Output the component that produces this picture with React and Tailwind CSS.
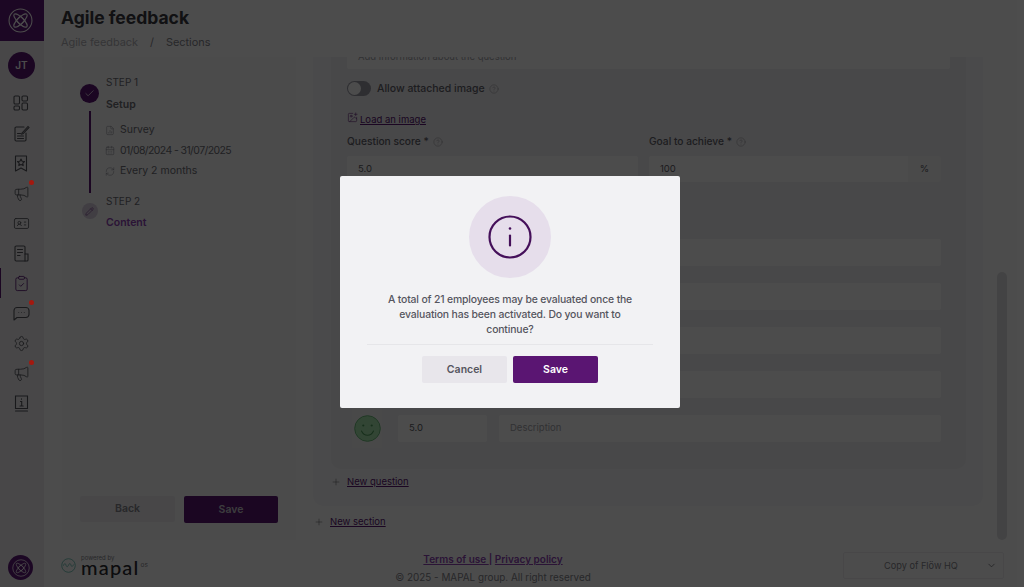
import { Check, Pencil, CalendarDays, RefreshCw, Megaphone, IdCard, ClipboardCheck, Settings, CircleHelp, Plus, ChevronDown, ImagePlus, FileChartColumn } from "lucide-react";

const font = { fontFamily: "Inter, 'Open Sans', sans-serif" };

const Logo = ({ size, color = "#ffffff" }) => (
  <svg width={size} height={size} viewBox="0 0 24 24" fill="none" stroke={color} strokeWidth="1">
    <circle cx="12" cy="12" r="11" />
    <ellipse cx="12" cy="12" rx="2.800" ry="8.500" transform="rotate(45 12 12)" />
    <ellipse cx="12" cy="12" rx="2.800" ry="8.500" transform="rotate(-45 12 12)" />
    <rect x="9" y="9" width="6" height="6" transform="rotate(45 12 12)" />
  </svg>
);

const DashIcon = () => (
  <svg width="16" height="16" viewBox="0 0 16 16" fill="none" stroke="currentColor" strokeWidth="1.1">
    <rect x="1" y="1" width="5.5" height="8" rx="1.2" />
    <rect x="1" y="11" width="5.5" height="4" rx="1.2" />
    <rect x="9" y="1" width="5.5" height="5" rx="1.2" />
    <rect x="9" y="8" width="5.5" height="7" rx="1.2" />
  </svg>
);

const NoteIcon = () => (
  <svg width="17" height="17" viewBox="0 0 17 17" fill="none" stroke="currentColor" strokeWidth="1.1" strokeLinecap="round">
    <path d="M11 2H3.2C2.5 2 2 2.5 2 3.2v11.6c0 .7.5 1.2 1.2 1.2h8.6c.7 0 1.2-.5 1.2-1.2V8" />
    <path d="M4.5 8.5h3M4.5 11h6M4.5 13.5h6" />
    <path d="M9 8l6-6.5 1 1-6 6.3-1.4.3z" />
  </svg>
);

const BookmarkIcon = () => (
  <svg width="16" height="17" viewBox="0 0 16 17" fill="none" stroke="currentColor" strokeWidth="1.1" strokeLinejoin="round">
    <path d="M2.5 1h11v15l-5.5-3-5.5 3z" />
    <path d="M8 4l1.1 2.2 2.4.3-1.7 1.7.4 2.4L8 9.5l-2.2 1.1.4-2.4-1.7-1.7 2.4-.3z" />
  </svg>
);

const ReportIcon = () => (
  <svg width="17" height="17" viewBox="0 0 17 17" fill="none" stroke="currentColor" strokeWidth="1.1" strokeLinecap="round">
    <path d="M12 9V2.2C12 1.5 11.5 1 10.8 1H3.2C2.5 1 2 1.500 2 2.200v12.600c0 .7.5 1.200 1.200 1.200H14c.6 0 1-.4 1-1V9z" />
    <path d="M12 16V9M4.500 4.500h5M4.500 7.500h5M4.500 10.500h2.500" />
  </svg>
);

const ChatIcon = () => (
  <svg width="17" height="15" viewBox="0 0 17 15" fill="none" stroke="currentColor" strokeWidth="1.1" strokeLinejoin="round">
    <path d="M4 1.500h9c1.500 0 3 1.300 3 3v4c0 1.700-1.500 3-3 3H4l-3 2.500V4.500c0-1.700 1.500-3 3-3z" />
    <path d="M5.500 6.500h.6M8.200 6.500h.6M10.900 6.500h.6" />
  </svg>
);

const BookInfoIcon = () => (
  <svg width="15" height="17" viewBox="0 0 15 17" fill="none" stroke="currentColor" strokeWidth="1.1" strokeLinecap="round">
    <path d="M1.500 13.500V1h12v12.500z" />
    <path d="M1.500 16h12" />
    <path d="M6.500 6.500h1.200v4.500M6 11h3.200M7.500 3.800v.4" />
  </svg>
);

const Face = () => (
  <svg width="27" height="27" viewBox="0 0 27 27">
    <circle cx="13.500" cy="13.500" r="12.800" fill="#a8e8b0" stroke="#6cba7a" strokeWidth="1" />
    <circle cx="9.300" cy="10.500" r="1.100" fill="#4f9e5c" />
    <circle cx="17.700" cy="10.500" r="1.100" fill="#4f9e5c" />
    <path d="M7.500 16c1.500 3.200 3.500 4.200 6 4.200s4.500-1 6-4.200" fill="none" stroke="#4f9e5c" strokeWidth="1.100" strokeLinecap="round" />
  </svg>
);

const sideItems = [
  { icon: <DashIcon /> },
  { icon: <NoteIcon /> },
  { icon: <BookmarkIcon /> },
  { icon: <Megaphone size={17} strokeWidth={1.2} />, dot: true },
  { icon: <IdCard size={17} strokeWidth={1.2} /> },
  { icon: <ReportIcon /> },
  { icon: <ClipboardCheck size={17} strokeWidth={1.2} />, active: true },
  { icon: <ChatIcon />, dot: true },
  { icon: <Settings size={17} strokeWidth={1.2} /> },
  { icon: <Megaphone size={17} strokeWidth={1.2} />, dot: true },
  { icon: <BookInfoIcon /> },
];

const Sidebar = () => (
  <aside className="flex w-[44px] shrink-0 flex-col bg-[#f0eff2]">
    <div className="flex h-[41px] w-full items-center justify-center bg-[#5f1a78] pr-[3px]">
      <Logo size={25} />
    </div>
    <div className="ml-[8px] mt-[11px] flex h-[27px] w-[27px] items-center justify-center rounded-full bg-[#5a1572] text-[10px] font-semibold text-white">JT</div>
    <div className="mt-[9px] flex w-full flex-col">
      {sideItems.map((item, i) => (
        <div key={i} className={`relative flex h-[30px] w-full items-center justify-center ${item.active ? "border-l border-[#5a1572] pr-[3px] text-[#5a1572]" : "pr-[2px] text-[#55555c]"}`}>
          {item.icon}
          {item.dot && <span className="absolute left-[29px] top-[2px] z-[60] h-[5px] w-[5px] rounded-full bg-[#a3190f]"></span>}
        </div>
      ))}
    </div>
    <div className="mb-[7px] ml-[8px] mt-auto flex h-[25px] w-[25px] items-center justify-center rounded-full bg-[#5f1a78]">
      <Logo size={18} />
    </div>
  </aside>
);

const StepLine = ({ icon, children, className = "" }) => (
  <div className={`flex h-[20.5px] items-center gap-[5px] text-[10.5px] text-[#6e6e75] ${className}`}>
    <span className="flex w-[10px] justify-center text-[#85858c]">{icon}</span>
    {children}
  </div>
);

const StepsPanel = () => (
  <div className="flex w-[234px] shrink-0 flex-col bg-[#fbfbfc] pl-[18px]">
    <div className="flex pt-[18px]">
      <div className="flex w-[19px] flex-col items-center">
        <div className="mt-[9px] flex h-[19px] w-[19px] items-center justify-center rounded-full bg-[#5a1572] text-white">
          <Check size={11} strokeWidth={1.5} />
        </div>
        <div className="mt-[8px] h-[82px] w-[2px] bg-[#5a1572]"></div>
      </div>
      <div className="ml-[7px]">
        <div className="text-[10px] leading-[14px] text-[#6e6e75]">STEP 1</div>
        <div className="mt-[9px] text-[10.5px] font-semibold leading-[14px] text-[#6e6e75]">Setup</div>
        <div className="ml-[-1px] mt-[8px]">
          <StepLine icon={<FileChartColumn size={11} strokeWidth={1.2} />}>Survey</StepLine>
          <StepLine icon={<CalendarDays size={11} strokeWidth={1.2} />} className="tracking-[-0.6px]">01/08/2024 - 31/07/2025</StepLine>
          <StepLine icon={<RefreshCw size={11} strokeWidth={1.2} />}>Every 2 months</StepLine>
        </div>
      </div>
    </div>
    <div className="flex">
      <div className="flex w-[19px] justify-center">
        <div className="mt-[10px] flex h-[16px] w-[16px] items-center justify-center rounded-full bg-[#d9cfe0] text-[#5a1572]">
          <Pencil size={9} strokeWidth={1.3} />
        </div>
      </div>
      <div className="ml-[7px]">
        <div className="mt-[1px] text-[10px] leading-[14px] text-[#6e6e75]">STEP 2</div>
        <div className="mt-[8px] text-[10.5px] font-semibold leading-[14px] text-[#8f45b5]">Content</div>
      </div>
    </div>
    <div className="mb-[17px] mt-auto flex gap-[9px]">
      <button className="h-[26px] w-[95px] rounded-[2px] bg-[#f0eff2] text-[10.5px] font-semibold text-[#85858c]">Back</button>
      <button className="h-[27px] w-[94px] rounded-[2px] bg-[#5a1572] text-[10.5px] font-semibold text-[#c9c9cf]">Save</button>
    </div>
  </div>
);

const ScoreRow = ({ score }) => (
  <div className="flex items-center">
    <div className="flex h-[40px] w-[30px] items-center justify-center bg-[#f5f5f6]">
      <Face />
    </div>
    <div className="ml-[16px] flex h-[27px] w-[89px] items-center rounded-[2px] bg-white pl-[11px] text-[9.5px] text-[#5e5e66]">{score}</div>
    <div className="ml-[12px] flex h-[27px] w-[442px] items-center rounded-[2px] bg-white pl-[11px] text-[9.5px] text-[#a5a5ac]">Description</div>
  </div>
);

const FormPanel = () => (
  <div className="flex min-w-0 flex-1 overflow-hidden pl-[17px]">
    <div className="w-[670px] shrink-0">
      <div className="rounded-b-[10px] bg-[#f9f9fa] pb-[17px]">
        <div className="ml-[18px] mr-[17px] rounded-b-[10px] bg-[#f1f0f3] pb-[21px] pl-[16px]">
          <div className="mt-[-2px] flex h-[14px] w-[603px] items-end rounded-[2px] bg-white pb-[7px] pl-[11px] text-[9.5px] leading-[10px] text-[#a5a5ac]">Add information about the question</div>
          <div className="mt-[12px] flex h-[15px] items-center">
            <div className="flex h-[15px] w-[24px] items-center rounded-full bg-[#9a9aa6] pl-[1px]">
              <div className="h-[13px] w-[13px] rounded-full bg-white"></div>
            </div>
            <span className="ml-[6px] text-[10.5px] font-medium text-[#63636b]">Allow attached image</span>
            <CircleHelp size={10} strokeWidth={1} className="ml-[4px] text-[#85858c]" />
          </div>
          <div className="mt-[17px] flex h-[14px] items-center text-[#5a1572]">
            <ImagePlus size={11} strokeWidth={1.2} className="mt-[-6px]" />
            <span className="ml-[2px] text-[9.5px] underline">Load an image</span>
          </div>
          <div className="mt-[8px] flex h-[14px]">
            <div className="flex w-[302px] items-center text-[10.2px] font-medium text-[#63636b]">
              Question score *<CircleHelp size={10} strokeWidth={1} className="ml-[4px] text-[#85858c]" />
            </div>
            <div className="flex items-center text-[10.2px] font-medium text-[#63636b]">
              Goal to achieve *<CircleHelp size={10} strokeWidth={1} className="ml-[4px] text-[#85858c]" />
            </div>
          </div>
          <div className="mt-[7px] flex h-[26px] text-[9.5px] text-[#5e5e66]">
            <div className="flex w-[291px] items-center rounded-[2px] bg-white pl-[11px]">5.0</div>
            <div className="ml-[11px] flex w-[259px] items-center rounded-l-[2px] bg-white pl-[11px]">100</div>
            <div className="flex w-[33px] items-center justify-center rounded-r-[2px] bg-[#f7f7f8]">%</div>
          </div>
          <div className="mt-[50px] flex flex-col gap-[4px] pl-[5px]">
            <ScoreRow score="1.0" />
            <ScoreRow score="2.0" />
            <ScoreRow score="3.0" />
            <ScoreRow score="4.0" />
            <ScoreRow score="5.0" />
          </div>
        </div>
        <div className="ml-[18px] mt-[6px] flex h-[14px] items-center text-[#5a1572]">
          <Plus size={10} strokeWidth={1.2} className="text-[#55555c]" />
          <span className="ml-[6px] text-[9.5px] underline">New question</span>
        </div>
      </div>
      <div className="ml-[1px] mt-[9px] flex h-[14px] items-center text-[#5a1572]">
        <Plus size={10} strokeWidth={1.2} className="text-[#55555c]" />
        <span className="ml-[6px] text-[9.5px] underline">New section</span>
      </div>
    </div>
    <div className="ml-[14px] flex w-[10px] flex-col justify-end">
      <div className="h-[268px] rounded-full bg-[#e2e2e4]"></div>
    </div>
  </div>
);

const Footer = () => (
  <footer className="flex h-[47px] shrink-0 items-start pl-[17px]">
    <div className="mt-[14px] flex w-[89px] shrink-0 items-center">
      <svg width="15" height="15" viewBox="0 0 21 21" fill="none" stroke="#5bb8aa" strokeWidth="1.1" className="mt-[3px] shrink-0">
        <circle cx="10.500" cy="10.500" r="9.500" />
        <path d="M3 11c2-4 3-4 4-1s2 3 3.500 0 2.500-3 3.500 0 2 2 4-1" />
      </svg>
      <div className="ml-[5px] flex flex-col">
        <span className="text-[6px] leading-[7px] text-[#85858c]">powered by</span>
        <div className="flex items-start">
          <span className="text-[20px] font-medium leading-[13px] tracking-[1.2px] text-[#2a2a30]" style={{ fontFamily: "Lato, sans-serif" }}>mapal</span>
          <span className="ml-[1px] text-[6.5px] leading-[8px] text-[#85858c]">os</span>
        </div>
      </div>
    </div>
    <div className="ml-[233px] flex w-[220px] shrink-0 flex-col items-center pt-[12px]">
      <div className="whitespace-nowrap text-[10px] font-semibold leading-[14px] text-[#8f45b5]">
        <span className="underline">Terms of use </span>| <span className="underline">Privacy policy</span>
      </div>
      <div className="mt-[4px] whitespace-nowrap text-[9.9px] leading-[14px] text-[#85858c]">© 2025 - MAPAL group. All right reserved</div>
    </div>
    <div className="ml-[240px] mt-[12px] flex h-[27px] w-[161px] shrink-0 items-center justify-between rounded-[2px] border border-[#f0eff2] pl-[40px] pr-[6px] text-[9.2px] text-[#85858c]">
      Copy of Flöw HQ
      <ChevronDown size={11} strokeWidth={1.5} className="text-[#55555c]" />
    </div>
  </footer>
);

const Modal = () => (
  <div className="absolute inset-0 z-50 flex items-center justify-center bg-black/70 pb-[3px] pr-[4px]">
    <div className="flex h-[232px] w-[340px] flex-col items-center rounded-[2px] bg-[#f2f2f4] pt-[20px]">
      <div className="flex h-[82px] w-[82px] items-center justify-center rounded-full bg-[#e6deeb] text-[#45105a]">
        <svg width="44" height="44" viewBox="0 0 44 44" fill="none" stroke="currentColor" strokeWidth="2.200" strokeLinecap="round">
          <circle cx="22" cy="22" r="20.500" />
          <path d="M22 20.500v10" />
          <circle cx="22" cy="13.500" r="1.300" fill="currentColor" stroke="none" />
        </svg>
      </div>
      <p className="mt-[14px] w-[250px] text-center text-[10.4px] font-medium leading-[15px] tracking-[-0.15px] text-[#55555e]">
        A total of 21 employees may be evaluated once the evaluation has been activated. Do you want to continue?
      </p>
      <div className="mt-[7px] h-px w-[286px] bg-[#e6e6e9]"></div>
      <div className="mt-[11px] flex gap-[6px]">
        <button className="h-[27px] w-[85px] rounded-[2px] bg-[#e8e6eb] text-[10.5px] font-semibold text-[#55555e]">Cancel</button>
        <button className="h-[27px] w-[85px] rounded-[2px] bg-[#5a1572] text-[10.5px] font-semibold text-white">Save</button>
      </div>
    </div>
  </div>
);

const App = () => (
  <div className="relative flex h-screen w-full overflow-hidden bg-white" style={font}>
    <Sidebar />
    <main className="flex min-w-0 flex-1 flex-col">
      <header className="h-[57px] shrink-0 pl-[17px]">
        <h1 className="pt-[7px] text-[17.5px] font-bold leading-[22px] text-[#3a3a42]">Agile feedback</h1>
        <div className="mt-[6px] flex items-center text-[10.9px] leading-[14px]">
          <span className="text-[#b0b0b6]">Agile feedback</span>
          <span className="ml-[12px] text-[#85858c]">/</span>
          <span className="ml-[12px] text-[#85858c]">Sections</span>
        </div>
      </header>
      <div className="flex min-h-0 flex-1 pl-[18px]">
        <StepsPanel />
        <FormPanel />
      </div>
      <Footer />
    </main>
    <Modal />
  </div>
);

export default App;
